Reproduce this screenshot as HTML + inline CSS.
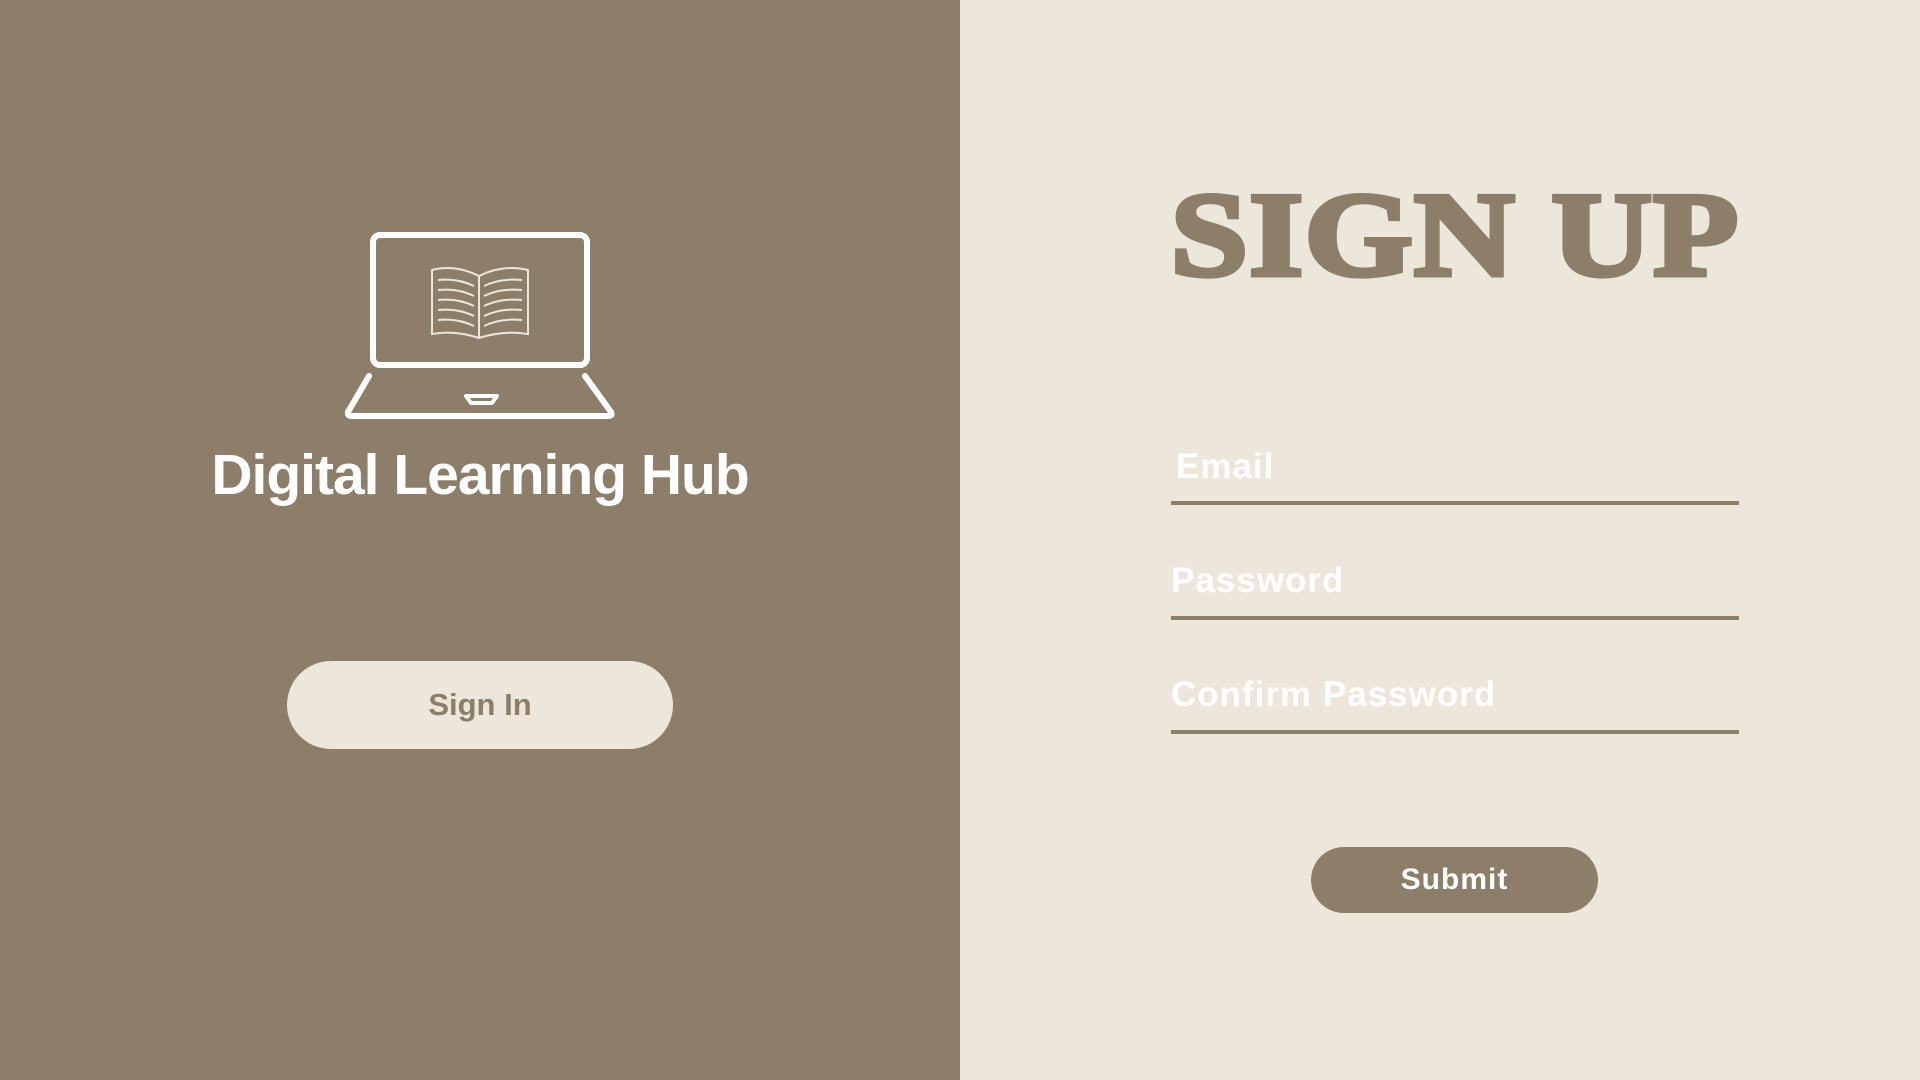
<!DOCTYPE html>
<html><head><meta charset="utf-8"><style>
*{margin:0;padding:0;box-sizing:border-box}
body{width:1920px;height:1080px;position:relative;overflow:hidden;background:#ece6db;font-family:"Liberation Sans",sans-serif}
#left{position:absolute;left:0;top:0;width:960px;height:1080px;background:#8c7e68}
.abs{position:absolute}
h1{position:absolute;left:0;width:960px;top:442px;text-align:center;color:#fff;font-size:57px;font-weight:bold;letter-spacing:-1px}
.signin{left:287px;top:661px;width:386px;height:88px;border-radius:44px;background:#ece6db;color:#8c7e68;font-size:31px;font-weight:bold;display:flex;align-items:center;justify-content:center}
h2{position:absolute;left:1155px;width:600px;top:175px;line-height:1;text-align:center;color:#8c7e68;font-family:"Liberation Serif",serif;font-weight:900;font-size:120px;letter-spacing:1px;-webkit-text-stroke:5px #8c7e68;transform:scaleX(1.16);transform-origin:center}
.lbl{position:absolute;left:1171px;color:#fff;font-size:35px;font-weight:bold;letter-spacing:1px}
.line{position:absolute;left:1171px;width:568px;height:4px;background:#8c7e68}
.submit{left:1311px;top:847px;width:287px;height:66px;border-radius:33px;background:#8c7e68;color:#fff;font-size:30px;font-weight:bold;display:flex;align-items:center;justify-content:center;letter-spacing:1px}
</style></head><body>
<div id="left"></div>
<svg class="abs" style="left:0;top:0" width="960" height="1080">
<g fill="none" stroke="#fff" stroke-width="6" stroke-linecap="round" stroke-linejoin="round">
<rect x="373" y="235" width="214" height="130" rx="7"/>
<path d="M369 376 L348 412 Q347 416 352 416 L608 416 Q613 416 611 412 L585 376"/>
<path d="M466 396 L497 396 L492 403 L471 403 Z" stroke-width="4"/>
</g>
<g fill="none" stroke="#ece6db" stroke-width="2">
<path d="M479 276 Q455 264 432 270 L432 334 Q455 330 479 338 Q503 330 528 334 L528 270 Q503 264 479 276 Z" fill="#8c7e68"/>
<path d="M479 276 L479 338"/>
<path d="M438 280 Q458 278 474 286 M438 290 Q458 288 474 296 M438 300 Q458 298 474 306 M438 310 Q458 308 474 316 M438 320 Q458 318 474 326"/>
<path d="M484 286 Q500 278 522 280 M484 296 Q500 288 522 290 M484 306 Q500 298 522 300 M484 316 Q500 308 522 310 M484 326 Q500 318 522 320"/>
</g>
</svg>
<h1>Digital Learning Hub</h1>
<div class="abs signin">Sign In</div>
<h2>SIGN UP</h2>
<div class="lbl" style="top:447px;left:1176px">Email</div>
<div class="line" style="top:501px"></div>
<div class="lbl" style="top:561px">Password</div>
<div class="line" style="top:616px"></div>
<div class="lbl" style="top:675px">Confirm Password</div>
<div class="line" style="top:730px"></div>
<div class="abs submit">Submit</div>
</body></html>
